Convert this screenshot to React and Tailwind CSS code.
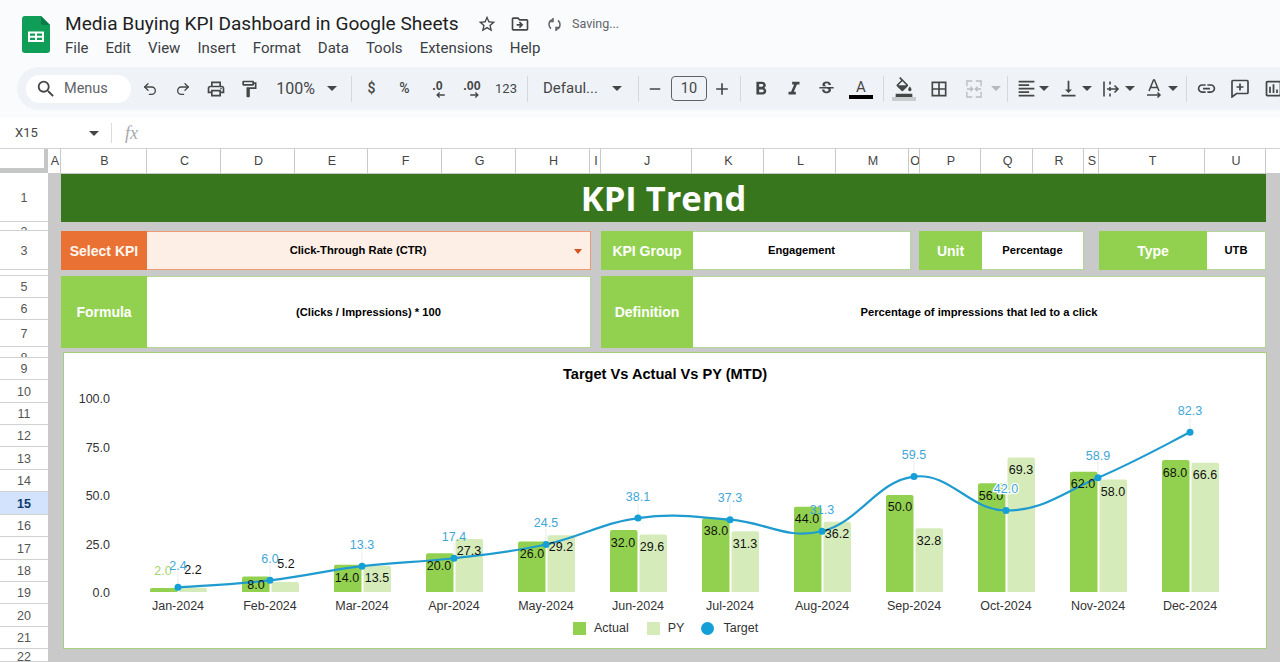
import React from "react";
import {
  MdSearch, MdOutlineLocalPrintshop, MdOutlineFormatPaint, MdRemove, MdAdd,
  MdFormatBold, MdFormatItalic, MdStrikethroughS, MdOutlineFormatColorFill, MdBorderAll, MdFormatAlignLeft,
  MdVerticalAlignBottom, MdLink, MdOutlineInsertChart, MdStarBorder, MdOutlineDriveFileMove,
} from "react-icons/md";
import { Undo2, Redo2 } from "lucide-react";

const uiFont = "font-['Roboto','Liberation_Sans',sans-serif]";

const columns = [
  ["A", "w-[13px]"], ["B", "w-[86px]"], ["C", "w-[74px]"], ["D", "w-[74px]"], ["E", "w-[73px]"], ["F", "w-[74px]"],
  ["G", "w-[74px]"], ["H", "w-[74px]"], ["I", "w-[11px]"], ["J", "w-[91px]"], ["K", "w-[72px]"], ["L", "w-[72px]"],
  ["M", "w-[73px]"], ["O", "w-[11px]"], ["P", "w-[61px]"], ["Q", "w-[52px]"], ["R", "w-[51px]"], ["S", "w-[15px]"],
  ["T", "w-[106px]"], ["U", "w-[61px]"],
];

const rows = [
  ["1", "h-[49px]", "translate-y-[1px]"], ["2", "h-[9px]", "translate-y-[6px]"], ["3", "h-[39px]", "translate-y-[1px]"],
  ["4", "h-[6px]", "translate-y-[8px]"], ["5", "h-[22px]", "translate-y-[1px]"], ["6", "h-[22px]", "translate-y-[1px]"],
  ["7", "h-[27px]", "translate-y-[1px]"], ["8", "h-[11px]", "translate-y-[6px]"], ["9", "h-[22px]", "translate-y-[1px]"],
  ["10", "h-[23px]", "translate-y-[1px]"], ["11", "h-[22px]", "translate-y-[1px]"], ["12", "h-[22px]", "translate-y-[1px]"],
  ["13", "h-[23px]", "translate-y-[1px]"], ["14", "h-[22px]", "translate-y-[1px]"], ["15", "h-[23px]", "translate-y-[1px]"],
  ["16", "h-[22px]", "translate-y-[1px]"], ["17", "h-[23px]", "translate-y-[1px]"], ["18", "h-[22px]", "translate-y-[1px]"],
  ["19", "h-[22px]", "translate-y-[1px]"], ["20", "h-[23px]", "translate-y-[1px]"], ["21", "h-[22px]", "translate-y-[1px]"],
  ["22", "h-[13px]", "translate-y-[2px]"],
];

const menus = ["File", "Edit", "View", "Insert", "Format", "Data", "Tools", "Extensions", "Help"];

const Divider = ({ className = "" }) => <div className={`w-px h-[26px] bg-[#d5d9de] shrink-0 ${className}`} />;

const Slot = ({ className = "w-[33px]", children }) => (
  <div className={`${className} h-full flex items-center justify-center shrink-0 text-[#444746]`}>{children}</div>
);

const Caret = ({ muted }) => (
  <svg width="10" height="5" viewBox="0 0 10 5" className="shrink-0"><path d="M0 0h10L5 5z" fill={muted ? "#b6b9bc" : "#444746"} /></svg>
);

function SheetsLogo() {
  return (
    <svg width="28" height="37" viewBox="0 0 28 37" className="shrink-0">
      <path d="M3 0h16l9 9v25a3 3 0 0 1-3 3H3a3 3 0 0 1-3-3V3a3 3 0 0 1 3-3z" fill="#0f9d58" />
      <path d="M19 0l9 9h-7a2 2 0 0 1-2-2z" fill="#0a7c45" />
      <path d="M6 15.500h16v10.500H6z" fill="#fff" />
      <path d="M8 17.500h5v2.300H8zM15 17.500h5v2.300h-5zM8 21.700h5v2.300H8zM15 21.700h5v2.300h-5z" fill="#0f9d58" />
    </svg>
  );
}

function SyncIcon() {
  return (
    <svg width="15" height="15" viewBox="0 0 15 15" fill="none" stroke="#5f6368" strokeWidth="1.500">
      <path d="M6 2.500C3.500 3 2 5 2 7.500c0 1.800.8 3.200 2 4.200" />
      <path d="M9 12.500c2.500-.5 4-2.500 4-5 0-1.800-.8-3.200-2-4.200" />
      <path d="M6 1v3.500H2.800M9 14v-3.500h3.200" />
    </svg>
  );
}

function MergeIcon() {
  return (
    <svg width="16" height="20" viewBox="0 0 18 20" fill="none" stroke="#b9bcc0" strokeWidth="1.500">
      <path d="M1 7V1h6M11 1h6v6M1 13v6h6M11 19h6v-6" />
      <path d="M1 10h6M5 7.500 7.500 10 5 12.500M17 10h-6M13 7.500 10.500 10l2.500 2.500" />
    </svg>
  );
}

function WrapIcon() {
  return (
    <svg width="18" height="18" viewBox="0 0 18 18" fill="none" stroke="#444746" strokeWidth="1.600">
      <path d="M2 1.500v15M8 1.500v3M8 7v4M8 13.500v3M5 9h11M12.500 5.500 16 9l-3.500 3.500" />
    </svg>
  );
}

function RotateIcon() {
  return (
    <svg width="18" height="20" viewBox="0 0 18 20" fill="none" stroke="#444746" strokeWidth="1.500">
      <path d="M4 12 8.500 1h1L14 12M5.700 8.500h6.600" />
      <path d="M2 16h13M12.500 13.500 15 16l-2.500 2.500" />
    </svg>
  );
}

function CommentIcon() {
  return (
    <svg width="18" height="19" viewBox="0 0 18 19" fill="none" stroke="#444746" strokeWidth="1.700">
      <path d="M2 1.500h14a1 1 0 0 1 1 1v11a1 1 0 0 1-1 1H5.500L1 18V2.500a1 1 0 0 1 1-1z" />
      <path d="M9 4.500v7M5.500 8h7" />
    </svg>
  );
}

function DecimalIcon({ label, reverse }) {
  return (
    <div className="flex flex-col items-center leading-none text-[#444746]">
      <span className="text-[12.500px] font-bold leading-[12px] font-['Liberation_Sans',sans-serif]">{label}</span>
      <svg width="9" height="6" viewBox="0 0 10 7" fill="none" stroke="#444746" strokeWidth="1.500" className="ml-[6px]">
        {reverse ? <path d="M0 3.500h9M6 .5l3 3-3 3" /> : <path d="M10 3.500H1M4 .5l-3 3 3 3" />}
      </svg>
    </div>
  );
}

function Toolbar() {
  return (
    <div className={`ml-[17px] h-[43px] rounded-l-[22px] bg-[#eff3f8] flex items-center pl-[9px] overflow-hidden text-[#444746] ${uiFont}`}>
      <div className="w-[105px] h-[28px] rounded-full bg-white flex items-center shrink-0 pl-[9px] gap-[7px] text-[14.500px] text-[#5f6368]">
        <MdSearch size={22} color="#444746" />
        <span>Menus</span>
      </div>
      <Slot className="w-[2px]" />
      <Slot><Undo2 size={16} strokeWidth={2} /></Slot>
      <Slot><Redo2 size={16} strokeWidth={2} /></Slot>
      <Slot><MdOutlineLocalPrintshop size={20} /></Slot>
      <Slot><MdOutlineFormatPaint size={20} /></Slot>
      <Slot className="w-[50px] text-[16px] justify-end">100%</Slot>
      <Slot className="w-[34px]"><Caret /></Slot>
      <Slot className="w-[2px]" />
      <Divider />
      <Slot className="w-[3px]" />
      <Slot className="w-[33px] text-[14px] font-medium">$</Slot>
      <Slot className="w-[33px] text-[14px] font-medium">%</Slot>
      <Slot className="w-[33px]"><DecimalIcon label=".0" /></Slot>
      <Slot className="w-[36px]"><DecimalIcon label=".00" reverse /></Slot>
      <Slot className="w-[32px] text-[13px]">123</Slot>
      <Slot className="w-[5px]" />
      <Divider />
      <Slot className="w-[15px]" />
      <Slot className="w-[58px] text-[15px] justify-start">Defaul...</Slot>
      <Slot className="w-[32px]"><Caret /></Slot>
      <Slot className="w-[5px]" />
      <Divider />
      <Slot className="w-[5px]" />
      <Slot className="w-[22px]"><MdRemove size={18} /></Slot>
      <Slot className="w-[5px]" />
      <div className="w-[36px] h-[25px] rounded-[4px] border border-[#5f6368] flex items-center justify-center text-[14.500px] shrink-0">10</div>
      <Slot className="w-[30px]"><MdAdd size={20} /></Slot>
      <Slot className="w-[3px]" />
      <Divider />
      <Slot className="w-[3px]" />
      <Slot><MdFormatBold size={22} /></Slot>
      <Slot><MdFormatItalic size={22} /></Slot>
      <Slot><MdStrikethroughS size={19} /></Slot>
      <Slot className="w-[36px]">
        <div className="flex flex-col items-center">
          <span className="text-[15px] leading-[16px]">A</span>
          <div className="w-[24px] h-[4px] bg-black" />
        </div>
      </Slot>
      <Slot className="w-[4px]" />
      <Divider />
      <Slot className="w-[40px]">
        <div className="flex flex-col items-center">
          <MdOutlineFormatColorFill size={20} />
          <div className="w-[24px] h-[4px] bg-[#c9cdd0]" />
        </div>
      </Slot>
      <Slot className="w-[30px]"><MdBorderAll size={20} /></Slot>
      <Slot className="w-[2px]" />
      <Slot className="w-[36px]"><MergeIcon /></Slot>
      <Slot className="w-[8px]"><Caret muted /></Slot>
      <Slot className="w-[7px]" />
      <Divider />
      <Slot className="w-[4px]" />
      <Slot className="w-[28px]"><MdFormatAlignLeft size={21} /></Slot>
      <Slot className="w-[8px]"><Caret /></Slot>
      <Slot className="w-[8px]" />
      <Slot className="w-[24px]"><MdVerticalAlignBottom size={21} /></Slot>
      <Slot className="w-[3px]" />
      <Slot className="w-[8px]"><Caret /></Slot>
      <Slot className="w-[8px]" />
      <Slot className="w-[24px]"><WrapIcon /></Slot>
      <Slot className="w-[14px]"><Caret /></Slot>
      <Slot className="w-[5px]" />
      <Slot className="w-[24px]"><RotateIcon /></Slot>
      <Slot className="w-[14px]"><Caret /></Slot>
      <Slot className="w-[6px]" />
      <Divider />
      <Slot className="w-[38px]"><MdLink size={21} /></Slot>
      <Slot className="w-[29px]"><CommentIcon /></Slot>
      <Slot className="w-[38px]"><MdOutlineInsertChart size={21} /></Slot>
    </div>
  );
}

const X = [178, 270, 362, 454, 546, 638, 730, 822, 914, 1006, 1098, 1190];
const LABELS = ["Jan-2024", "Feb-2024", "Mar-2024", "Apr-2024", "May-2024", "Jun-2024", "Jul-2024", "Aug-2024", "Sep-2024", "Oct-2024", "Nov-2024", "Dec-2024"];
const ACTUAL = [2, 8, 14, 20, 26, 32, 38, 44, 50, 56, 62, 68];
const PY = [2.2, 5.2, 13.5, 27.3, 29.2, 29.6, 31.3, 36.2, 32.8, 69.3, 58, 66.6];
const TARGET = [2.4, 6, 13.3, 17.4, 24.5, 38.1, 37.3, 31.3, 59.5, 42, 58.9, 82.3];
const ACTUAL_POS = [[163, 570], [256, 584], [347, 577], [439, 565], [532, 553], [623, 542], [716, 530], [807, 518], [900, 506], [991, 495], [1083, 483], [1175, 472]];
const PY_POS = [[193, 569], [286, 563], [377, 577], [469, 550], [561, 546.500], [652, 546], [745, 543], [837, 533], [929, 540], [1021, 469], [1113, 491], [1205, 474]];
const TARGET_LABEL_Y = [565, 558, 544, 536, 522, 496, 497, 509, 454, 488, 455, 410];

const yOf = (v) => 592 - v * 1.94;

function smoothPath(points) {
  const k = 0.2;
  let d = `M${points[0][0]} ${points[0][1]}`;
  for (let i = 0; i < points.length - 1; i++) {
    const p0 = points[Math.max(i - 1, 0)];
    const p1 = points[i];
    const p2 = points[i + 1];
    const p3 = points[Math.min(i + 2, points.length - 1)];
    d += ` C${p1[0] + (p2[0] - p0[0]) * k} ${p1[1] + (p2[1] - p0[1]) * k} ${p2[0] - (p3[0] - p1[0]) * k} ${p2[1] - (p3[1] - p1[1]) * k} ${p2[0]} ${p2[1]}`;
  }
  return d;
}

function Bar({ x, v, fill }) {
  const top = yOf(v);
  const r = Math.min(2, (592 - top) / 2);
  return <path d={`M${x} 592V${top + r}q0-${r} ${r}-${r}h${27.500 - 2 * r}q${r} 0 ${r} ${r}V592z`} fill={fill} />;
}

function Chart() {
  const pts = X.map((x, i) => [x, yOf(TARGET[i])]);
  return (
    <svg viewBox="64 353 1202 295" className="w-full h-full block font-['Liberation_Sans',sans-serif]">
      {X.map((x, i) => (
        <g key={x}>
          <Bar x={x - 28} v={ACTUAL[i]} fill="#92d14f" />
          <Bar x={x + 1.500} v={PY[i]} fill="#d5ecba" />
        </g>
      ))}
      {[["100.0", 398], ["75.0", 447], ["50.0", 495], ["25.0", 544], ["0.0", 592]].map(([t, y]) => (
        <text key={t} x="110" y={y + 4.500} textAnchor="end" fontSize="12.500" fill="#333">{t}</text>
      ))}
      {X.map((x, i) => (
        <text key={x} x={x} y="609.500" textAnchor="middle" fontSize="12.500" fill="#333">{LABELS[i]}</text>
      ))}
      {X.map((x, i) => (
        <line key={x} x1={x} x2={x} y1={TARGET_LABEL_Y[i] + 7} y2={yOf(TARGET[i])} stroke="#e4e4e4" strokeWidth="0.700" />
      ))}
      <path d={smoothPath(pts)} fill="none" stroke="#1f9bcf" strokeWidth="2.200" />
      {pts.map(([x, y]) => <circle key={x} cx={x} cy={y} r="3.500" fill="#159fd7" />)}
      {ACTUAL_POS.map(([x, y], i) => (
        <text key={i} x={x} y={y + 4.500} textAnchor="middle" fontSize="12.500" fill={i === 0 ? "#a5d36b" : "#111"}>{ACTUAL[i].toFixed(1)}</text>
      ))}
      {PY_POS.map(([x, y], i) => (
        <text key={i} x={x} y={y + 4.500} textAnchor="middle" fontSize="12.500" fill="#111">{PY[i].toFixed(1)}</text>
      ))}
      {X.map((x, i) => (
        <text key={x} x={x} y={TARGET_LABEL_Y[i] + 4.500} textAnchor="middle" fontSize="12.500" fill="#3fa7d8" stroke="#fff" strokeWidth={i === 9 ? 2.500 : 0} paintOrder="stroke">{TARGET[i].toFixed(1)}</text>
      ))}
    </svg>
  );
}

const LabelCell = ({ className, children }) => (
  <div className={`${className} h-full shrink-0 bg-[#92d14f] text-white font-bold text-[14px] flex items-center justify-center pt-[1px]`}>{children}</div>
);
const ValueCell = ({ className, children }) => (
  <div className={`${className} h-full shrink-0 bg-white border border-[#b3d69a] border-l-0 text-black font-bold text-[11.200px] flex items-center justify-center`}>{children}</div>
);

export default function App() {
  return (
    <div className="w-[1280px] h-[662px] overflow-hidden bg-white flex flex-col font-['Liberation_Sans',sans-serif]">
      <div className="h-[118px] shrink-0 bg-[#f9fbfd] flex flex-col">
        <div className="h-[67px] shrink-0 flex items-start pl-[22px] pt-[16px]">
          <SheetsLogo />
          <div className={`ml-[15px] -mt-[5px] flex flex-col ${uiFont}`}>
            <div className="flex items-center h-[26px]">
              <span className="text-[19.100px] text-[#1f1f1f] w-[412px] shrink-0 whitespace-nowrap">Media Buying KPI Dashboard in Google Sheets</span>
              <MdStarBorder size={20} color="#444746" />
              <span className="w-[13px]" />
              <MdOutlineDriveFileMove size={20} color="#444746" />
              <span className="w-[17px]" />
              <SyncIcon />
              <span className="ml-[10px] text-[12.500px] text-[#5f6368]">Saving...</span>
            </div>
            <div className="flex items-center h-[22px] gap-[17px] text-[15px] text-[#3c4043]">
              {menus.map((m) => <span key={m}>{m}</span>)}
            </div>
          </div>
        </div>
        <Toolbar />
      </div>

      <div className={`h-[30px] shrink-0 bg-white flex items-center text-[#444746] ${uiFont}`}>
        <span className="ml-[15px] w-[74px] text-[13px]">X15</span>
        <Caret />
        <div className="ml-[12px] w-px h-[20px] bg-[#dadce0]" />
        <span className="ml-[13px] font-['Liberation_Serif',serif] italic text-[18px] text-[#a6a9ac]">fx</span>
      </div>

      <div className="h-[25px] shrink-0 flex border-t border-[#cfd1d3] bg-white text-[12.500px] text-[#444]">
        <div className="w-[48px] shrink-0 border-r-[4px] border-b-[5px] border-[#c4c7c5]" />
        {columns.map(([c, w]) => (
          <div key={c} className={`${w} shrink-0 border-r border-[#c7c9cb] flex items-center justify-center overflow-hidden pl-[2px]`}>{c}</div>
        ))}
      </div>

      <div className="flex flex-1 min-h-0">
        <div className="w-[48px] shrink-0 flex flex-col text-[12.500px] text-[#555]">
          {rows.map(([r, h, shift]) => (
            <div
              key={r}
              className={`${h} shrink-0 overflow-hidden border-b border-[#cfd1d3] flex items-center justify-center ${r === "15" ? "bg-[#d3e3fd] font-bold text-[#0b3a70]" : "bg-white"}`}
            >
              <span className={`shrink-0 ${shift}`}>{r}</span>
            </div>
          ))}
        </div>

        <div className="flex-1 bg-[#c8c9c8] pl-[13px] pr-[14px] pt-[1px] flex flex-col">
          <div className="h-[48px] shrink-0 bg-[#38761d] text-white text-[34.500px] font-bold flex items-center justify-center font-['Open_Sans',sans-serif]">
            KPI Trend
          </div>
          <div className="mt-[9px] h-[39px] shrink-0 flex">
            <div className="w-[86px] h-full shrink-0 bg-[#ea7134] text-[#fff6ef] font-bold text-[14px] flex items-center justify-center pt-[1px]">Select KPI</div>
            <div className="w-[444px] h-full shrink-0 bg-[#fdeee6] border border-[#ee9a73] border-l-0 text-black font-bold text-[11.200px] flex items-center justify-center relative pr-[21px]">
              Click-Through Rate (CTR)
              <svg width="8" height="5" viewBox="0 0 8 5" className="absolute right-[8px] top-[17px]"><path d="M0 0h8L4 5z" fill="#d9531e" /></svg>
            </div>
            <div className="w-[10px] shrink-0" />
            <LabelCell className="w-[92px]">KPI Group</LabelCell>
            <ValueCell className="w-[218px]">Engagement</ValueCell>
            <div className="w-[8px] shrink-0" />
            <LabelCell className="w-[63px]">Unit</LabelCell>
            <ValueCell className="w-[102px]">Percentage</ValueCell>
            <div className="w-[15px] shrink-0" />
            <LabelCell className="w-[108px]">Type</LabelCell>
            <ValueCell className="w-[59px]">UTB</ValueCell>
          </div>
          <div className="mt-[6px] h-[72px] shrink-0 flex">
            <LabelCell className="w-[86px]">Formula</LabelCell>
            <ValueCell className="w-[444px]">(Clicks / Impressions) * 100</ValueCell>
            <div className="w-[10px] shrink-0" />
            <LabelCell className="w-[92px]">Definition</LabelCell>
            <ValueCell className="w-[573px]">Percentage of impressions that led to a click</ValueCell>
          </div>
          <div className="mt-[4px] ml-[2px] w-[1204px] -mr-[1px] h-[297px] shrink-0 bg-white border border-[#a5cf7c] relative">
            <div className="absolute top-[11px] left-0 right-0 text-center text-[14.600px] font-bold text-black">Target Vs Actual Vs PY (MTD)</div>
            <div className="absolute bottom-[10px] left-[509px] flex items-center text-[12.500px] text-[#333]">
              <span className="w-[13px] h-[13px] bg-[#92d14f]" />
              <span className="ml-[8px]">Actual</span>
              <span className="ml-[18px] w-[13px] h-[13px] bg-[#d5ecba]" />
              <span className="ml-[8px]">PY</span>
              <span className="ml-[17px] w-[13px] h-[13px] rounded-full bg-[#159fd7]" />
              <span className="ml-[9px]">Target</span>
            </div>
            <Chart />
          </div>
        </div>
      </div>
    </div>
  );
}
